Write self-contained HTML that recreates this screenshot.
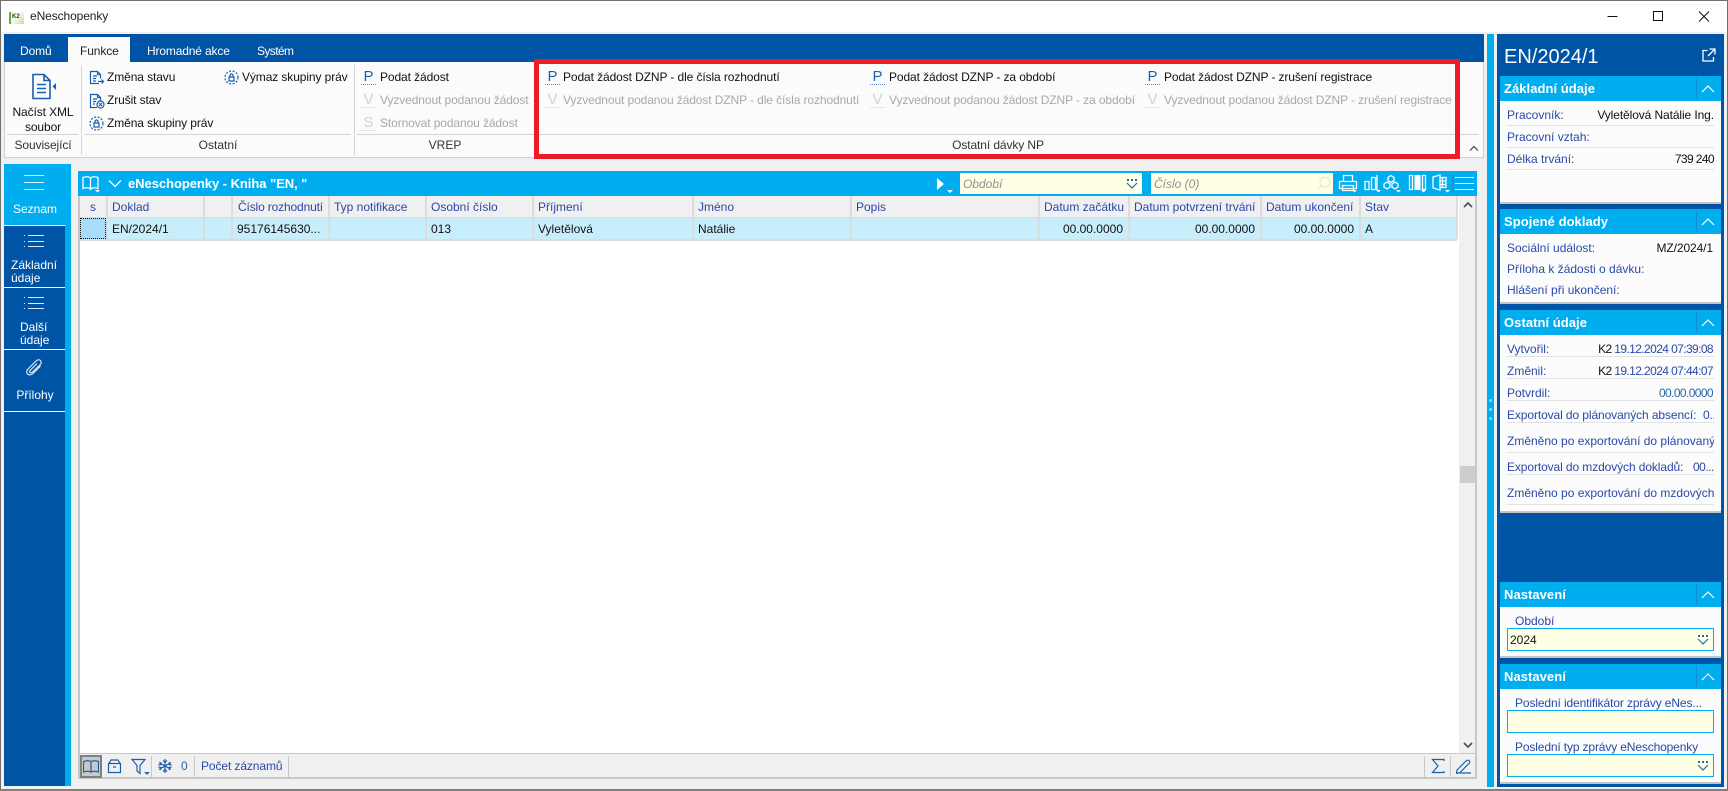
<!DOCTYPE html>
<html lang="cs"><head><meta charset="utf-8"><title>eNeschopenky</title>
<style>
html,body{margin:0;padding:0;width:1728px;height:791px;overflow:hidden;background:#f0f0f0}
body{position:relative;font-family:"Liberation Sans",sans-serif;font-size:12px;color:#000}
div,span,svg{position:absolute;box-sizing:border-box}
.t{white-space:nowrap;line-height:16px;height:16px;font-size:12px}
.n{letter-spacing:-.1px}
.d{color:#a8a8a8;letter-spacing:-.1px}
.b{color:#2a48a8}
.w{color:#fff}
.c{transform:translateX(-50%)}
.r{transform:translateX(-100%)}
.P{width:15px;height:15px;font-size:15px;line-height:15px;text-align:center;color:#1d62b0;white-space:nowrap}
.P.g{color:#d2d2d2}
.u{height:0;width:15px;border-top:1px dotted #5b8ccb}
.u.g{border-top-color:#d2d2d2}
.hd{left:1500px;width:221px;height:25px;background:#00aeef}
.hd .t{left:4px;top:5px;font-size:13px;font-weight:bold;color:#fff;letter-spacing:.05px}
.dv{left:196px;top:2px;width:1px;height:21px;background:#0f8fcc}
.cd{left:1500px;width:221px;background:#fcfcfc;border-bottom:2px solid #c4c4c4}
.ln{left:1507px;width:207px;height:1px;background:#e2e2e2}
.gv{top:196px;width:2px;height:43px;background:#dcdcdc}
.ic{fill:none;stroke:#1a5fad;stroke-width:1.2}
.iw{fill:none;stroke:#fff;stroke-width:1.3}
.inp{left:1507px;width:207px;height:23px;background:#ffffe6;border:1px solid #00aeef}
.nm{letter-spacing:-.6px}
</style></head><body>
<svg width="0" height="0" style="left:0;top:0">
<defs>
<symbol id="dd" viewBox="0 0 12 11"><path d="M1 1h2v2H1zM5 1h2v2H5zM9 1h2v2H9z" fill="#2a66ad"/><path d="M1 5l5 5 5-5" fill="none" stroke="#2a66ad" stroke-width="1.2"/></symbol>
<symbol id="ch" viewBox="0 0 14 8"><path d="M1 7l6-6 6 6" fill="none" stroke="#fff" stroke-width="1.2"/></symbol>
</defs></svg>

<!-- window frame -->
<div style="left:0;top:0;width:1728px;height:1px;background:#707070"></div>
<div style="left:0;top:0;width:1px;height:791px;background:#707070"></div>
<div style="right:0;top:0;width:1px;height:791px;background:#707070"></div>
<div style="left:0;top:789px;width:1728px;height:2px;background:#808080"></div>
<div style="left:1px;top:1px;width:1726px;height:31px;background:#fff"></div>
<div style="left:1px;top:32px;width:3px;height:757px;background:#f0f0f0"></div>

<!-- title icon -->
<div style="left:9px;top:12px;width:15px;height:12px;background:linear-gradient(135deg,#fdfdfd 40%,#bfe08f)"></div>
<div style="left:9px;top:12px;width:2px;height:12px;background:#5cb82a"></div>
<div class="t" style="left:12px;top:13px;font-size:6px;line-height:8px;height:8px;font-weight:bold;color:#333">K2</div>
<div class="t n" style="left:30px;top:8px;color:#222">eNeschopenky</div>
<svg style="left:1600px;top:6px" width="118" height="20"><path d="M7.5 10.5h10" stroke="#111" fill="none"/><path d="M53.5 5.5h9v9h-9z" stroke="#111" fill="none"/><path d="M99 5.5l10 10M109 5.5l-10 10" stroke="#111" fill="none"/></svg>

<!-- ribbon -->
<div style="left:4px;top:34px;width:1480px;height:28px;background:#0054a6"></div>
<div style="left:68px;top:37px;width:62px;height:25px;background:#fbfbfb"></div>
<div class="t w" style="left:20px;top:43px;letter-spacing:-.1px">Domů</div>
<div class="t" style="left:80px;top:43px;color:#222;letter-spacing:-.1px">Funkce</div>
<div class="t w" style="left:147px;top:43px;letter-spacing:-.15px">Hromadné akce</div>
<div class="t w" style="left:257px;top:43px;letter-spacing:-.6px">Systém</div>
<div style="left:4px;top:62px;width:1480px;height:96px;background:#fbfbfb;border:1px solid #d2d2d2;border-top:0"></div>
<div style="left:7px;top:134px;width:1472px;height:1px;background:#d4d4d4"></div>
<div style="left:81px;top:65px;width:1px;height:90px;background:#d4d4d4"></div>
<div style="left:354px;top:65px;width:1px;height:90px;background:#d4d4d4"></div>
<div style="left:78px;top:134px;width:6px;height:1px;background:#fbfbfb"></div>
<div style="left:351px;top:134px;width:6px;height:1px;background:#fbfbfb"></div>

<svg style="left:31px;top:73px" width="26" height="27" viewBox="0 0 26 27"><path class="ic" style="stroke-width:1.6" d="M2 1.500h11l6 6v18H2zM13 1.500v6h6M6 11.500h9M6 15.500h9M6 19.500h9"/><path d="M25 10v7l-3.500-3.500z" fill="#1a5fad"/></svg>
<div class="t c n" style="left:43px;top:104px;color:#111">Načíst XML</div>
<div class="t c n" style="left:43px;top:119px;color:#111">soubor</div>
<div class="t c n" style="left:43px;top:137px;color:#333">Související</div>

<svg style="left:89px;top:70px" width="16" height="16" viewBox="0 0 16 16"><path class="ic" d="M10 13.500H1.500v-12h7l3 3v4M8.500 1.500v3h3M4 6h4M4 8.500h3M4 11h3M9 11.500h5M12.500 9.500l2 2-2 2"/></svg>
<div class="t n" style="left:107px;top:69px;color:#111">Změna stavu</div>
<svg style="left:89px;top:93px" width="16" height="16" viewBox="0 0 16 16"><path class="ic" d="M8 14.500H1.500v-13h7l3 3v4M8.500 1.500v3h3M4 6h4M4 8.500h3M4 11h2"/><circle class="ic" cx="11.500" cy="11.500" r="3.500"/><path class="ic" d="M10 10l3 3M13 10l-3 3"/></svg>
<div class="t n" style="left:107px;top:92px;color:#111">Zrušit stav</div>
<svg style="left:89px;top:116px" width="15" height="15" viewBox="0 0 15 15"><circle class="ic" cx="7.500" cy="7.500" r="6.500" stroke-dasharray="2 1.500"/><path class="ic" d="M5 7h5v4H5zM6 7V5.500a1.500 1.500 0 0 1 3 0V7"/></svg>
<div class="t n" style="left:107px;top:115px;color:#111">Změna skupiny práv</div>
<svg style="left:224px;top:70px" width="15" height="15" viewBox="0 0 15 15"><circle class="ic" cx="7.500" cy="7.500" r="6.500" stroke-dasharray="2 1.500"/><path class="ic" d="M5 7h5v4H5zM6 7V5.500a1.500 1.500 0 0 1 3 0V7"/></svg>
<div class="t n" style="left:242px;top:69px;color:#111">Výmaz skupiny práv</div>
<div class="t c" style="left:218px;top:137px;color:#333">Ostatní</div>

<div class="P" style="left:361px;top:69px">P</div><div class="u" style="left:361px;top:84px"></div>
<div class="t n" style="left:380px;top:69px;color:#111">Podat žádost</div>
<div class="P g" style="left:361px;top:92px">V</div><div class="u g" style="left:361px;top:107px"></div>
<div class="t d" style="left:380px;top:92px">Vyzvednout podanou žádost</div>
<div class="P g" style="left:361px;top:115px">S</div><div class="u g" style="left:361px;top:130px"></div>
<div class="t d" style="left:380px;top:115px">Stornovat podanou žádost</div>
<div class="t c" style="left:445px;top:137px;color:#333">VREP</div>

<div class="P" style="left:545px;top:69px">P</div><div class="u" style="left:545px;top:84px"></div>
<div class="t n" style="left:563px;top:69px;color:#111">Podat žádost DZNP - dle čísla rozhodnutí</div>
<div class="P g" style="left:545px;top:92px">V</div><div class="u g" style="left:545px;top:107px"></div>
<div class="t d" style="left:563px;top:92px">Vyzvednout podanou žádost DZNP - dle čísla rozhodnutí</div>
<div class="P" style="left:870px;top:69px">P</div><div class="u" style="left:870px;top:84px"></div>
<div class="t n" style="left:889px;top:69px;color:#111">Podat žádost DZNP - za období</div>
<div class="P g" style="left:870px;top:92px">V</div><div class="u g" style="left:870px;top:107px"></div>
<div class="t d" style="left:889px;top:92px">Vyzvednout podanou žádost DZNP - za období</div>
<div class="P" style="left:1145px;top:69px">P</div><div class="u" style="left:1145px;top:84px"></div>
<div class="t n" style="left:1164px;top:69px;color:#111">Podat žádost DZNP - zrušení registrace</div>
<div class="P g" style="left:1145px;top:92px">V</div><div class="u g" style="left:1145px;top:107px"></div>
<div class="t d" style="left:1164px;top:92px">Vyzvednout podanou žádost DZNP - zrušení registrace</div>
<div class="t c n" style="left:998px;top:137px;color:#333">Ostatní dávky NP</div>
<svg style="left:1469px;top:145px" width="10" height="7"><path d="M1 5.500l4-4 4 4" fill="none" stroke="#444" stroke-width="1.200"/></svg>
<div style="left:534px;top:59px;width:926px;height:100px;border:5px solid #ed1c24"></div>

<!-- left nav -->
<div style="left:4px;top:164px;width:67px;height:622px;background:#00aeef"></div>
<div style="left:4px;top:226px;width:61px;height:560px;background:#0054a6"></div>
<div style="left:4px;top:225px;width:61px;height:1px;background:#fff"></div>
<div style="left:4px;top:287px;width:61px;height:1px;background:#fff"></div>
<div style="left:4px;top:349px;width:61px;height:1px;background:#fff"></div>
<div style="left:4px;top:411px;width:61px;height:1px;background:#fff"></div>
<svg style="left:24px;top:172px" width="21" height="20"><path d="M0 3.500h20M0 10.500h20M0 17.500h20" stroke="#dff4fd" fill="none"/></svg>
<div class="t c w" style="left:35px;top:201px">Seznam</div>
<svg style="left:24px;top:233px" width="21" height="16"><path d="M4 2.500h16M4 8.500h16M4 13.500h16" stroke="#dfe9f5" fill="none"/><path d="M0 2.500h2M0 8.500h2M0 13.500h2" stroke="#dfe9f5" stroke-dasharray="1 1" fill="none"/></svg>
<div class="t w" style="left:11px;top:257px">Základní</div>
<div class="t w" style="left:11px;top:270px">údaje</div>
<svg style="left:24px;top:295px" width="21" height="16"><path d="M4 2.500h16M4 8.500h16M4 13.500h16" stroke="#dfe9f5" fill="none"/><path d="M0 2.500h2M0 8.500h2M0 13.500h2" stroke="#dfe9f5" stroke-dasharray="1 1" fill="none"/></svg>
<div class="t w" style="left:20px;top:319px">Další</div>
<div class="t w" style="left:20px;top:332px">údaje</div>
<svg style="left:25px;top:358px" width="19" height="20" viewBox="0 0 19 20"><path d="M15.500 8L8 15.500c-2 2-5 2-6-.5-.7-1.500 0-3 1-4l8-8c1.500-1.500 3.500-1.500 4.500-.5s1 3-.5 4.500L7.500 14c-1 1-2 1-2.500.5s-.5-1.500.5-2.500L12 5.500" fill="none" stroke="#dfe9f5" stroke-width="1.200"/></svg>
<div class="t c w" style="left:35px;top:387px">Přílohy</div>

<!-- grid -->
<div style="left:78px;top:171px;width:1399px;height:608px;background:#fff;border:solid #c8c8c8;border-width:0 2px 2px 2px"></div>
<div style="left:78px;top:171px;width:1399px;height:25px;background:#00aeef"></div>
<svg style="left:82px;top:175px" width="19" height="18" viewBox="0 0 19 18"><path class="iw" d="M1 2.500c3-1 6-1 7.500.5v11c-1.500-1.500-4.500-1.500-7.500-.5zM16 2.500c-3-1-6-1-7.500.5v11c1.500-1.500 4.500-1.500 7.500-.5z"/><path d="M13 15h5l-2.500 2.500z" fill="#fff"/></svg>
<svg style="left:108px;top:179px" width="14" height="9"><path d="M1 1.500l6 6 6-6" class="iw"/></svg>
<div class="t" style="left:128px;top:176px;font-size:13px;font-weight:bold;color:#fff;letter-spacing:-.05px">eNeschopenky - Kniha "EN, "</div>
<svg style="left:936px;top:177px" width="18" height="17"><path d="M1 1l7 6-7 6z" fill="#fff"/><path d="M11 13h6l-3 3z" fill="#fff"/></svg>
<div style="left:960px;top:173px;width:182px;height:21px;background:#ffffe6"></div>
<div class="t" style="left:963px;top:176px;font-style:italic;color:#909090">Období</div>
<svg style="left:1126px;top:178px;" width="12" height="11"><use href="#dd"/></svg>
<div style="left:1151px;top:173px;width:182px;height:21px;background:#ffffe6"></div>
<div class="t" style="left:1154px;top:176px;font-style:italic;color:#909090">Číslo (0)</div>
<svg style="left:1316px;top:176px" width="15" height="15"><circle cx="9" cy="6" r="5" fill="none" stroke="#e6e6cc"/><path d="M5.500 9.500L1 14" stroke="#e6e6cc" fill="none"/></svg>
<svg style="left:1338px;top:174px" width="138" height="20" viewBox="0 0 138 20">
<path class="iw" d="M5.500 7V1.500h9V7M1.500 7.500h17v7h-17zM4.500 11.500h11v5h-11z"/><path d="M14 16h5l-2.500 2.500z" fill="#fff"/>
<path class="iw" d="M27 7.500h4v8h-4zM33.500 3.500h4v12h-4zM33 15.500h6V1"/><path d="M38 16h5l-2.500 2.500z" fill="#fff"/>
<path class="iw" d="M53 1.500l3 2v3l-3 2-3-2v-3zM49 8l3 2v3l-3 2-3-2v-3zM57 8l3 2v3l-3 2-3-2v-3z"/><path d="M58 16h5l-2.500 2.500z" fill="#fff"/>
<path class="iw" d="M71.500 1.500h3v14h-3zM84.500 1.500h3v14h-3z"/><path d="M76.500 1h6v15h-6z" fill="#fff"/><path d="M83 16h5l-2.500 2.500z" fill="#fff"/>
<path class="iw" d="M95 3l7-2v15l-7-2zM102 3.500h6v10h-6zM104.500 3.500v10M102 7h6M102 10.500h6"/><path d="M107 16h5l-2.500 2.500z" fill="#fff"/>
<path d="M114.500 1v16" stroke="#0f8fcc" fill="none"/>
<path d="M117 3.500h19M117 9.500h19M117 15.500h19" stroke="#fff" fill="none"/></svg>

<!-- table header -->
<div style="left:80px;top:196px;width:1377px;height:22px;background:#f0f0f0"></div>
<div style="left:80px;top:218px;width:1377px;height:21px;background:#c9eefb"></div>
<div style="left:80px;top:239px;width:1377px;height:2px;background:#dcdcdc"></div>
<div style="left:80px;top:217px;width:1377px;height:1px;background:#dcdcdc"></div>
<div class="gv" style="left:106px"></div><div class="gv" style="left:203px"></div><div class="gv" style="left:231px"></div><div class="gv" style="left:328px"></div><div class="gv" style="left:425px"></div><div class="gv" style="left:532px"></div><div class="gv" style="left:692px"></div><div class="gv" style="left:850px"></div><div class="gv" style="left:1038px"></div><div class="gv" style="left:1128px"></div><div class="gv" style="left:1260px"></div><div class="gv" style="left:1359px"></div><div class="gv" style="left:1456px"></div>
<div style="left:80px;top:218px;width:26px;height:21px;background:#a9dcf8;border:1px dotted #111"></div>
<div class="t b c" style="left:93px;top:199px">s</div>
<div class="t b" style="left:112px;top:199px">Doklad</div>
<div class="t b" style="left:238px;top:199px;letter-spacing:-.15px">Číslo rozhodnutí</div>
<div class="t b" style="left:334px;top:199px">Typ notifikace</div>
<div class="t b" style="left:431px;top:199px">Osobní číslo</div>
<div class="t b" style="left:538px;top:199px">Příjmení</div>
<div class="t b" style="left:698px;top:199px">Jméno</div>
<div class="t b" style="left:856px;top:199px">Popis</div>
<div class="t b" style="left:1044px;top:199px">Datum začátku</div>
<div class="t b" style="left:1134px;top:199px">Datum potvrzení trvání</div>
<div class="t b" style="left:1266px;top:199px">Datum ukončení</div>
<div class="t b" style="left:1365px;top:199px">Stav</div>
<div class="t" style="left:112px;top:221px;color:#111">EN/2024/1</div>
<div class="t" style="left:237px;top:221px;color:#111">95176145630...</div>
<div class="t" style="left:431px;top:221px;color:#111">013</div>
<div class="t" style="left:538px;top:221px;color:#111">Vyletělová</div>
<div class="t" style="left:698px;top:221px;color:#111">Natálie</div>
<div class="t r" style="left:1123px;top:221px;color:#111">00.00.0000</div>
<div class="t r" style="left:1255px;top:221px;color:#111">00.00.0000</div>
<div class="t r" style="left:1354px;top:221px;color:#111">00.00.0000</div>
<div class="t" style="left:1365px;top:221px;color:#111">A</div>

<!-- scrollbar -->
<div style="left:1459px;top:196px;width:16px;height:557px;background:#f0f0f0"></div>
<div style="left:1460px;top:466px;width:15px;height:17px;background:#cdcdcd"></div>
<svg style="left:1463px;top:201px" width="10" height="8"><path d="M1 6l4-4 4 4" fill="none" stroke="#555" stroke-width="1.800"/></svg>
<svg style="left:1463px;top:741px" width="10" height="8"><path d="M1 2l4 4 4-4" fill="none" stroke="#555" stroke-width="1.800"/></svg>

<!-- status bar -->
<div style="left:80px;top:753px;width:1395px;height:24px;background:#f0f0f0;border-top:1px solid #c8c8c8"></div>
<div style="left:80px;top:755px;width:22px;height:23px;background:#c8c8c8;border:2px solid #808080"></div>
<svg style="left:83px;top:759px" width="16" height="15" viewBox="0 0 16 15"><path class="ic" d="M.5 2.500c3-1 5.500-1 7.500 0v10.500c-2-1-4.500-1-7.500 0zM15.500 2.500c-3-1-5.500-1-7.500 0v10.500c2-1 4.500-1 7.500 0z"/></svg>
<svg style="left:107px;top:759px" width="15" height="15" viewBox="0 0 15 15"><path class="ic" d="M1.500 4.500h12v9h-12zM2 4.500l2-3.500h7l2 3.500M6 8h3"/></svg>
<svg style="left:131px;top:758px" width="20" height="18" viewBox="0 0 20 18"><path class="ic" d="M1 1.500h13l-5 6v8l-3-2.500V7.500z"/><path d="M13 14h6l-3 3z" fill="#2a66ad"/></svg>
<div style="left:151px;top:756px;width:1px;height:21px;background:#c8c8c8"></div>
<svg style="left:157px;top:758px" width="16" height="16" viewBox="0 0 16 16"><path class="ic" d="M8 1v14M2 4.500l12 7M14 4.500l-12 7M6 2.500l2 2 2-2M6 13.500l2-2 2 2M1.500 7l2.500-.5-.5-2.500M14.500 7L12 6.500l.5-2.500M1.500 9l2.500.5-.5 2.500M14.500 9l-2.500.5.5 2.500"/></svg>
<div class="t b" style="left:181px;top:758px;color:#2a66ad">0</div>
<div style="left:194px;top:756px;width:1px;height:21px;background:#c8c8c8"></div>
<div class="t b n" style="left:201px;top:758px">Počet záznamů</div>
<div style="left:288px;top:756px;width:1px;height:21px;background:#c8c8c8"></div>
<div style="left:1424px;top:756px;width:1px;height:21px;background:#c8c8c8"></div>
<div style="left:1450px;top:756px;width:1px;height:21px;background:#c8c8c8"></div>
<svg style="left:1431px;top:758px" width="14" height="16" viewBox="0 0 14 16"><path class="ic" d="M13 3V1.500H1.500L7 8l-5.500 6.500H13V13"/></svg>
<svg style="left:1456px;top:758px" width="16" height="16" viewBox="0 0 16 16"><path class="ic" d="M1 12l9-9c1-1 2-1 3-.5s1 2 0 3L4 14.500l-3.500 1zM4 15h11"/></svg>

<!-- strip + right panel -->
<div style="left:1487px;top:34px;width:7px;height:753px;background:#00aeef"></div>
<div style="left:1489px;top:399px;width:3px;height:3px;background:#7fd6f7;border-radius:50%"></div>
<div style="left:1489px;top:408px;width:3px;height:3px;background:#7fd6f7;border-radius:50%"></div>
<div style="left:1489px;top:417px;width:3px;height:3px;background:#7fd6f7;border-radius:50%"></div>
<div style="left:1497px;top:34px;width:227px;height:753px;background:#0054a6"></div>
<div class="t w" style="left:1504px;top:45px;height:24px;line-height:24px;font-size:20px">EN/2024/1</div>
<svg style="left:1702px;top:48px" width="14" height="14" viewBox="0 0 14 14"><path d="M5.500 2.500h-4.500v10.500h10.500V9M7.500 1h5.500v5.500M13 1L6 8" fill="none" stroke="#fff" stroke-width="1.300"/></svg>

<!-- card 1 -->
<div class="hd" style="top:76px"><div class="t">Základní údaje</div><div class="dv"></div><svg style="left:201px;top:9px" width="14" height="8"><use href="#ch"/></svg></div>
<div class="cd" style="top:101px;height:103px"></div>
<div class="t b" style="left:1507px;top:107px">Pracovník:</div>
<div class="t r" style="left:1714px;top:107px;color:#111;letter-spacing:-.1px">Vyletělová Natálie Ing.</div>
<div class="ln" style="top:125px"></div>
<div class="t b" style="left:1507px;top:129px">Pracovní vztah:</div>
<div class="ln" style="top:147px"></div>
<div class="t b" style="left:1507px;top:151px">Délka trvání:</div>
<div class="t r nm" style="left:1714px;top:151px;color:#111">739 240</div>
<div class="ln" style="top:169px"></div>

<!-- card 2 -->
<div class="hd" style="top:209px"><div class="t">Spojené doklady</div><div class="dv"></div><svg style="left:201px;top:9px" width="14" height="8"><use href="#ch"/></svg></div>
<div class="cd" style="top:234px;height:70px"></div>
<div class="t b" style="left:1507px;top:240px">Sociální událost:</div>
<div class="t r" style="left:1713px;top:240px;color:#111;letter-spacing:-.1px">MZ/2024/1</div>
<div class="t b" style="left:1507px;top:261px">Příloha k žádosti o dávku:</div>
<div class="t b" style="left:1507px;top:282px">Hlášení při ukončení:</div>

<!-- card 3 -->
<div class="hd" style="top:310px"><div class="t">Ostatní údaje</div><div class="dv"></div><svg style="left:201px;top:9px" width="14" height="8"><use href="#ch"/></svg></div>
<div class="cd" style="top:335px;height:178px"></div>
<div class="t b" style="left:1507px;top:341px">Vytvořil:</div>
<div class="t r nm" style="left:1713px;top:341px;color:#2a48a8"><span style="position:static;color:#111">K2</span> 19.12.2024 07:39:08</div>
<div class="ln" style="top:356px"></div>
<div class="t b" style="left:1507px;top:363px">Změnil:</div>
<div class="t r nm" style="left:1713px;top:363px;color:#2a48a8"><span style="position:static;color:#111">K2</span> 19.12.2024 07:44:07</div>
<div class="ln" style="top:378px"></div>
<div class="t b" style="left:1507px;top:385px">Potvrdil:</div>
<div class="t r nm" style="left:1713px;top:385px;color:#2a66ad">00.00.0000</div>
<div class="ln" style="top:400px"></div>
<div class="t b" style="left:1507px;top:407px;letter-spacing:-.1px">Exportoval do plánovaných absencí:</div>
<div class="t b" style="left:1703px;top:407px;width:11px;overflow:hidden;letter-spacing:-.3px">0..</div>
<div class="ln" style="top:422px"></div>
<div class="t b" style="left:1507px;top:433px;width:207px;overflow:hidden">Změněno po exportování do plánovaných</div>
<div class="ln" style="top:452px"></div>
<div class="t b" style="left:1507px;top:459px;letter-spacing:-.1px">Exportoval do mzdových dokladů:</div>
<div class="t b" style="left:1693px;top:459px;width:21px;overflow:hidden;letter-spacing:-.5px">00...</div>
<div class="ln" style="top:474px"></div>
<div class="t b" style="left:1507px;top:485px;width:207px;overflow:hidden">Změněno po exportování do mzdových</div>
<div class="ln" style="top:504px"></div>

<!-- settings 1 -->
<div class="hd" style="top:582px"><div class="t">Nastavení</div><div class="dv"></div><svg style="left:201px;top:9px" width="14" height="8"><use href="#ch"/></svg></div>
<div class="cd" style="top:607px;height:51px"></div>
<div class="t b" style="left:1515px;top:613px">Období</div>
<div class="inp" style="top:628px"></div>
<div class="t" style="left:1510px;top:632px;color:#111">2024</div>
<svg style="left:1697px;top:634px" width="12" height="11"><use href="#dd"/></svg>

<!-- settings 2 -->
<div class="hd" style="top:664px"><div class="t">Nastavení</div><div class="dv"></div><svg style="left:201px;top:9px" width="14" height="8"><use href="#ch"/></svg></div>
<div class="cd" style="top:689px;height:95px"></div>
<div class="t b" style="left:1515px;top:695px;letter-spacing:-.12px">Poslední identifikátor zprávy eNes...</div>
<div class="inp" style="top:710px"></div>
<div class="t b" style="left:1515px;top:739px;letter-spacing:-.14px">Poslední typ zprávy eNeschopenky</div>
<div class="inp" style="top:754px"></div>
<svg style="left:1697px;top:760px" width="12" height="11"><use href="#dd"/></svg>
</body></html>
